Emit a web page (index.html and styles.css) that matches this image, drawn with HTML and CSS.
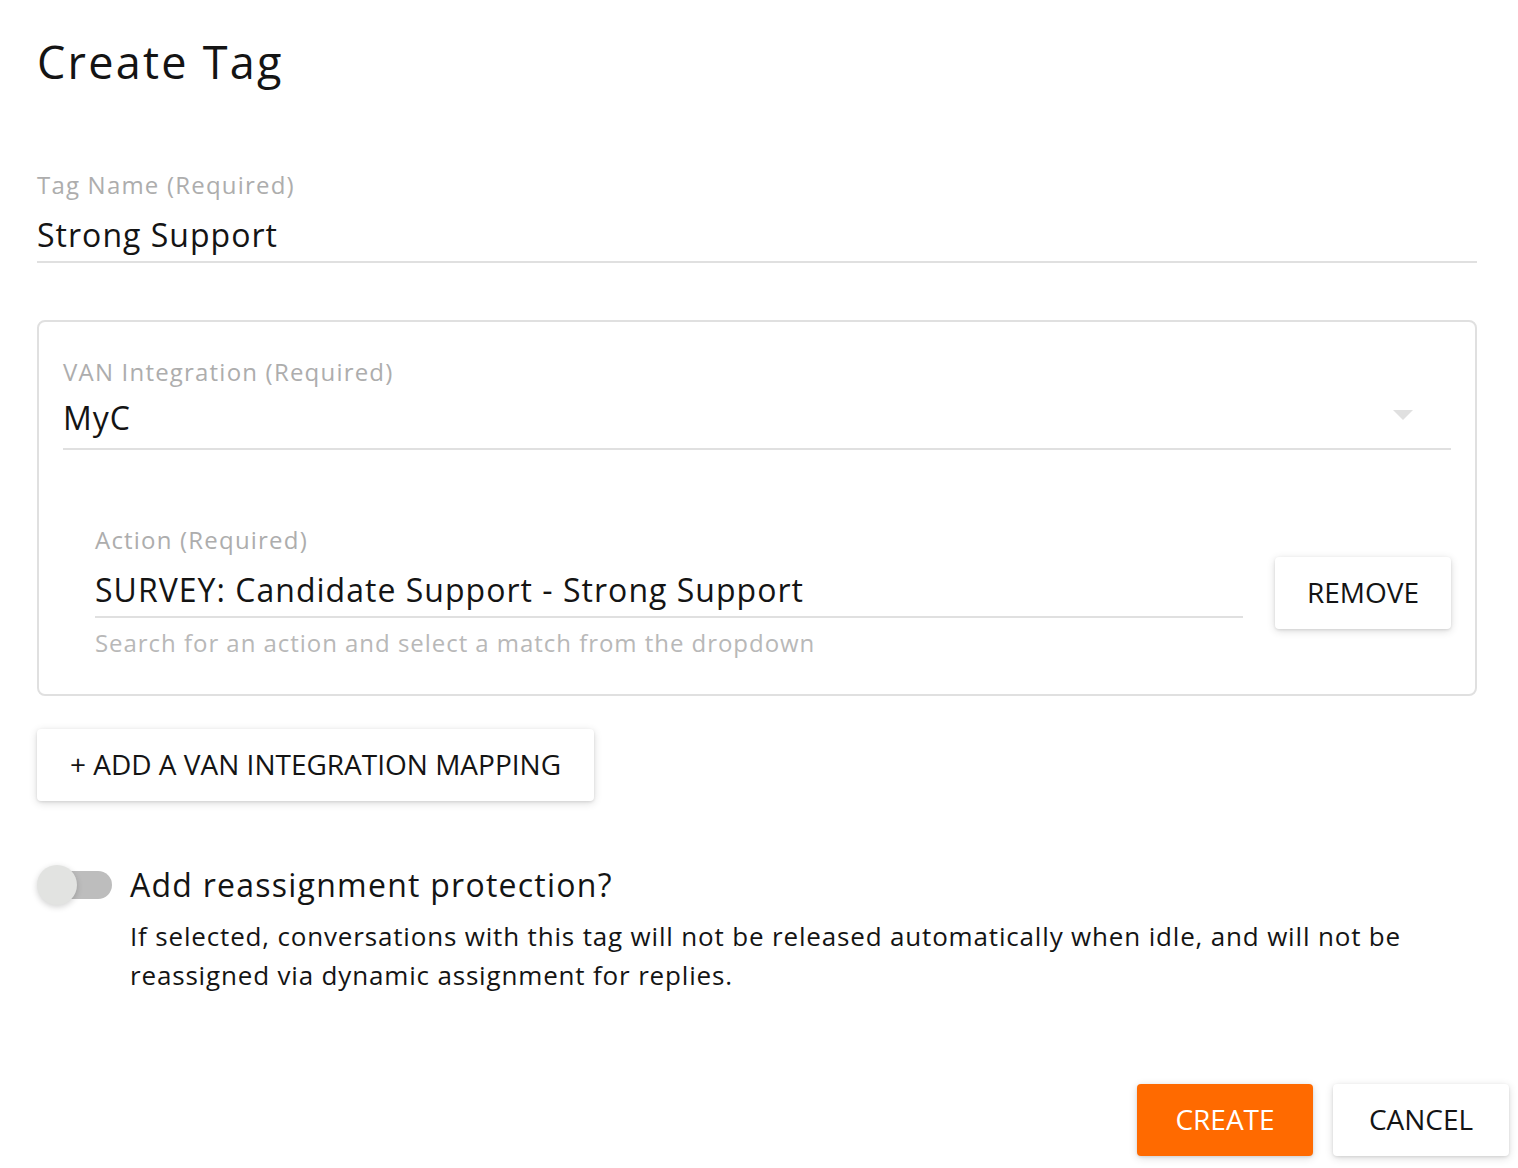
FILE: index.html
```html
<!DOCTYPE html>
<html>
<head>
<meta charset="utf-8">
<link rel="stylesheet" href="styles.css">
</head>
<body>
<div class="dialog">
  <h1 class="title">Create Tag</h1>

  <div class="field tag-field">
    <div class="label">Tag Name (Required)</div>
    <div class="value">Strong Support</div>
    <div class="underline"></div>
  </div>

  <div class="mapping-box">
    <div class="field select-field">
      <div class="label">VAN Integration (Required)</div>
      <div class="value-row">
        <div class="value">MyC</div>
        <svg class="arrow" width="20" height="10" viewBox="0 0 20 10"><path d="M0 0 L10 10 L20 0 Z" fill="#e0e0e0"/></svg>
      </div>
      <div class="underline"></div>
    </div>

    <div class="action-row">
      <div class="field action-field">
        <div class="label">Action (Required)</div>
        <div class="value">SURVEY: Candidate Support - Strong Support</div>
        <div class="underline"></div>
        <div class="helper">Search for an action and select a match from the dropdown</div>
      </div>
      <button class="btn btn-remove">REMOVE</button>
    </div>
  </div>

  <button class="btn btn-add">+ ADD A VAN INTEGRATION MAPPING</button>

  <div class="toggle-row">
    <div class="toggle">
      <div class="track"></div>
      <div class="thumb"></div>
    </div>
    <div class="toggle-text">
      <div class="toggle-title">Add reassignment protection?</div>
      <div class="toggle-desc">If selected, conversations with this tag will not be released automatically when idle, and will not be reassigned via dynamic assignment for replies.</div>
    </div>
  </div>

  <div class="actions">
    <button class="btn btn-create">CREATE</button>
    <button class="btn btn-cancel">CANCEL</button>
  </div>
</div>
</body>
</html>
```

FILE: styles.css
```css
html, body {
  margin: 0;
  padding: 0;
  background: #ffffff;
}
body {
  font-family: "Open Sans", "Liberation Sans", sans-serif;
  color: #1a1a1a;
}
.dialog {
  width: 1518px;
  height: 1168px;
  box-sizing: border-box;
  padding: 36px 9px 0 37px;
  display: flex;
  flex-direction: column;
}
.title {
  margin: 0;
  font-size: 45px;
  line-height: 52px;
  font-weight: 400;
  letter-spacing: 0.05em;
  color: #141414;
}
.field {
  display: flex;
  flex-direction: column;
}
.label {
  font-size: 24px;
  line-height: 32px;
  letter-spacing: 0.05em;
  color: #adadad;
}
.value {
  font-size: 32px;
  line-height: 40px;
  letter-spacing: 0.032em;
  color: #141414;
}
.underline {
  height: 2px;
  background: #e0e0e0;
}
.tag-field {
  margin-top: 81px;
  width: 1440px;
}
.tag-field .value { margin-top: 14px; }
.tag-field .underline { margin-top: 6px; }

.mapping-box {
  margin-top: 57px;
  width: 1440px;
  box-sizing: border-box;
  border: 2px solid #e0e0e0;
  border-radius: 8px;
  padding: 34px 24px 36px 24px;
  display: flex;
  flex-direction: column;
}
.select-field .value-row {
  margin-top: 10px;
  display: flex;
  align-items: center;
  justify-content: space-between;
}
.select-field .arrow {
  margin-right: 38px;
  margin-top: -6px;
}
.select-field .underline { margin-top: 10px; }

.action-row {
  margin-top: 74px;
  padding-left: 32px;
  display: flex;
  align-items: center;
  gap: 32px;
}
.action-field {
  flex: 1;
}
.action-field .value { margin-top: 14px; }
.action-field .underline { margin-top: 6px; }
.helper {
  margin-top: 10px;
  font-size: 24px;
  line-height: 30px;
  letter-spacing: 0.04em;
  color: #b8b8b8;
}

.btn {
  font-family: inherit;
  border: none;
  border-radius: 4px;
  background: #ffffff;
  color: #141414;
  font-size: 28px;
  line-height: 36px;
  height: 72px;
  padding: 0 32px 2px;
  box-shadow: 0 2px 8px rgba(0,0,0,0.14), 0 1px 3px rgba(0,0,0,0.1);
  cursor: pointer;
}
.btn-remove {
  width: 176px;
  padding: 0 0 2px;
  margin-top: 4px;
}
.btn-add {
  margin-top: 33px;
  align-self: flex-start;
  width: 557px;
  padding: 0 0 2px;
}

.toggle-row {
  margin-top: 64px;
  display: flex;
  align-items: flex-start;
}
.toggle {
  position: relative;
  width: 76px;
  height: 40px;
  margin-right: 17px;
}
.track {
  position: absolute;
  left: 3px;
  top: 6px;
  width: 72px;
  height: 28px;
  border-radius: 14px;
  background: #bdbdbd;
}
.thumb {
  position: absolute;
  left: 0;
  top: 0;
  width: 40px;
  height: 40px;
  border-radius: 50%;
  background: #e2e3e1;
  box-shadow: 0 2px 6px rgba(0,0,0,0.18);
}
.toggle-title {
  font-size: 32px;
  line-height: 40px;
  letter-spacing: 0.039em;
  color: #141414;
}
.toggle-desc {
  margin-top: 12px;
  font-size: 26px;
  line-height: 39px;
  letter-spacing: 0.032em;
  color: #141414;
  max-width: 1310px;
}

.actions {
  margin-top: auto;
  margin-bottom: 12px;
  display: flex;
  justify-content: flex-end;
  gap: 20px;
}
.btn-create {
  width: 176px;
  padding: 0 0 2px;
  background: #ff6a00;
  color: #ffffff;
}
.btn-cancel {
  width: 176px;
  padding: 0 0 2px;
}
```
